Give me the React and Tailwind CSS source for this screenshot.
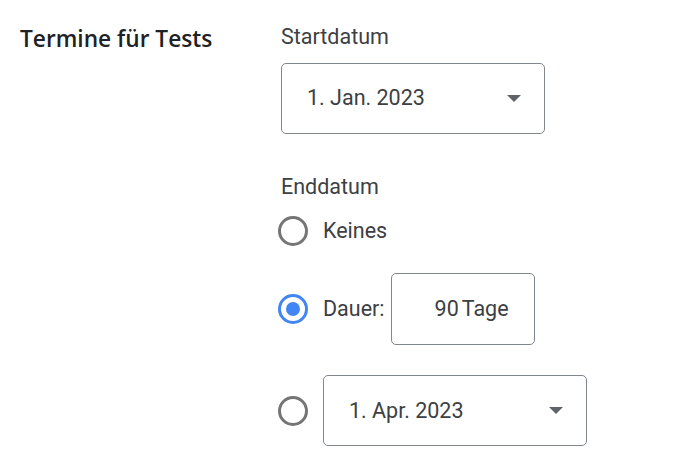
import React from 'react';

function Caret() {
  return (
    <svg width="14" height="7" viewBox="0 0 14 7" className="shrink-0">
      <path d="M0 0h14L7 7z" fill="#5f6368" />
    </svg>
  );
}

function Radio({ checked }) {
  return (
    <span
      className={
        'flex h-[30px] w-[30px] shrink-0 items-center justify-center rounded-full border-[3px] ' +
        (checked ? 'border-[#4285f4]' : 'border-[#757575]')
      }
    >
      {checked && <span className="h-[14px] w-[14px] rounded-full bg-[#4285f4]" />}
    </span>
  );
}

function DateSelect({ value, className = '' }) {
  return (
    <div
      className={
        'flex h-[71px] w-[264px] items-center justify-between rounded-[5px] border border-[#80868b] pl-[25px] pr-[23px] ' +
        className
      }
    >
      <span>{value}</span>
      <Caret />
    </div>
  );
}

export default function App() {
  return (
    <div
      className="flex min-h-[470px] bg-white pl-[20px] pt-[24px] text-[21.5px] text-[#3c4043]"
      style={{ fontFamily: 'Roboto, "Liberation Sans", sans-serif' }}
    >
      {/* Section title */}
      <div className="w-[261px] shrink-0">
        <h2
          className="pt-[1px] text-[22.7px] font-semibold leading-[28px] text-[#202124]"
          style={{ fontFamily: '"Open Sans", "Noto Sans", sans-serif' }}
        >
          Termine für Tests
        </h2>
      </div>

      {/* Dates */}
      <div className="flex flex-col">
        <label className="leading-[26px]">Startdatum</label>
        <DateSelect value="1. Jan. 2023" className="mt-[13px]" />

        <label className="mt-[40px] leading-[26px]">Enddatum</label>

        <div className="mt-[15px] -ml-[3px] flex items-center gap-[15px]">
          <Radio />
          <span>Keines</span>
        </div>

        <div className="mt-[26px] -ml-[3px] flex items-center">
          <Radio checked />
          <span className="ml-[15px]">Dauer:</span>
          <div className="ml-[6px] flex h-[72px] w-[144px] items-center justify-end rounded-[5px] border border-[#80868b] pr-[25px]">
            <span>90</span>
            <span className="ml-[3px]">Tage</span>
          </div>
        </div>

        <div className="mt-[30px] -ml-[3px] flex items-center">
          <Radio />
          <DateSelect value="1. Apr. 2023" className="ml-[15px]" />
        </div>
      </div>
    </div>
  );
}
